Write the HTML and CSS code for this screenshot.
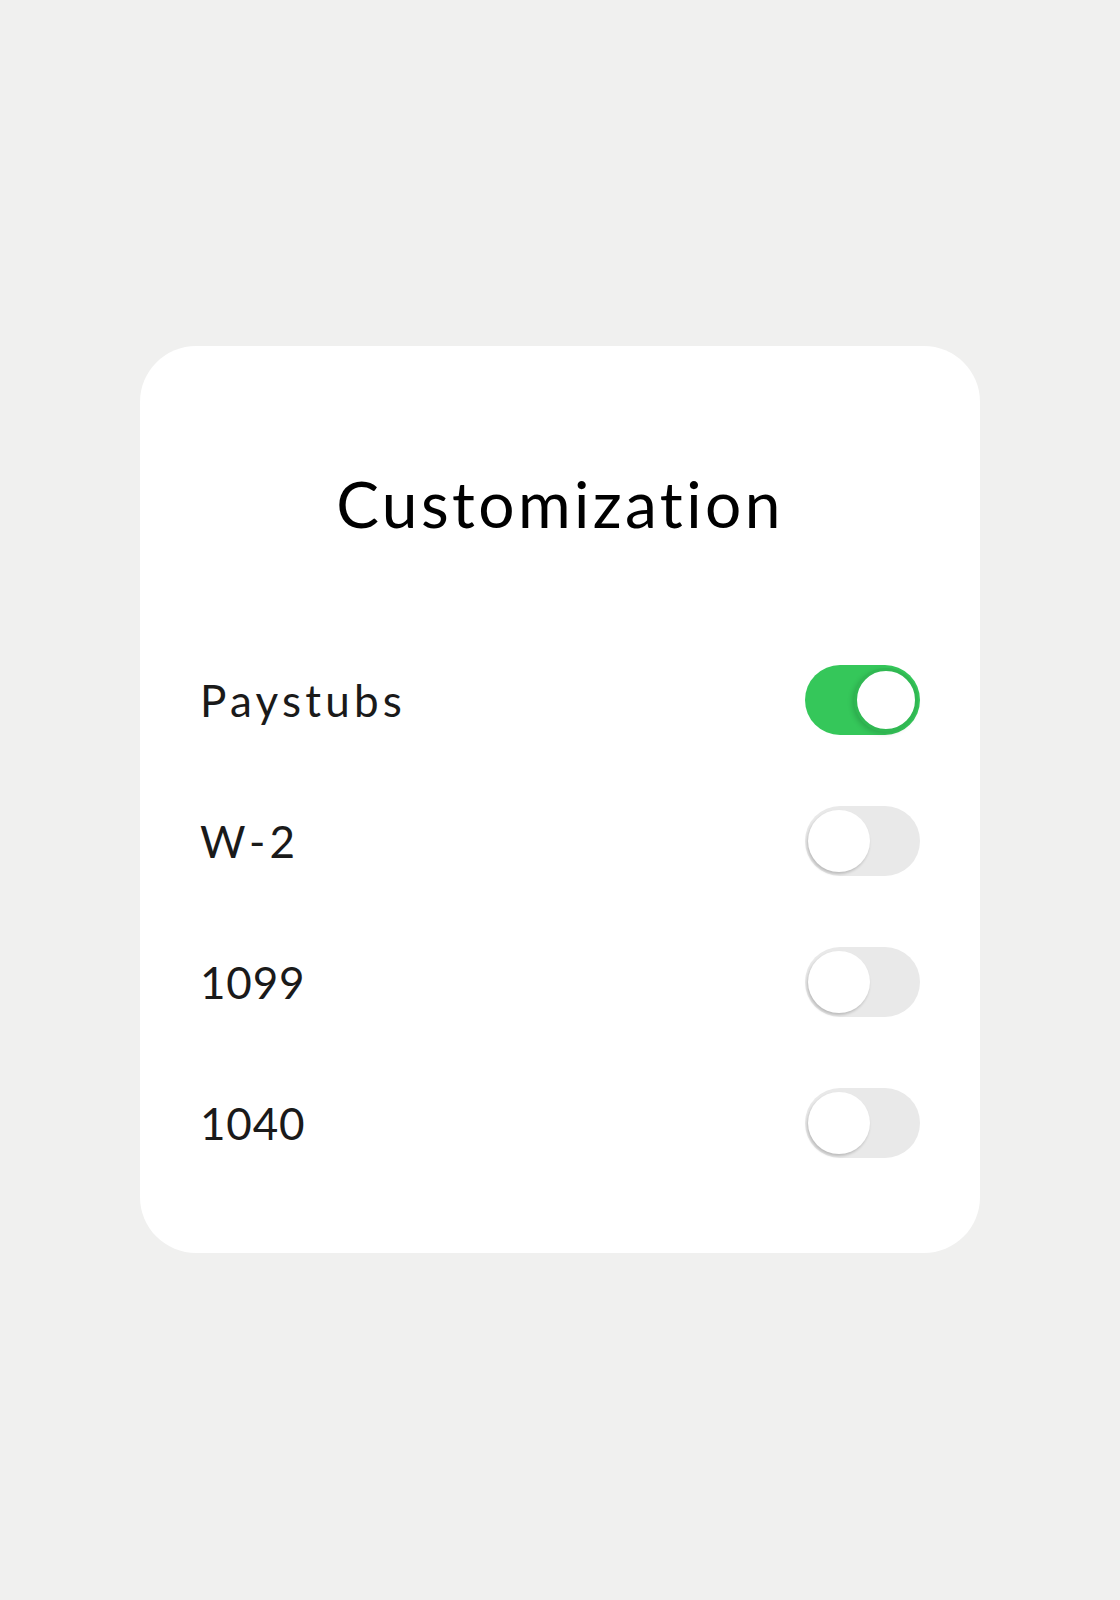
FILE: index.html
```html
<!DOCTYPE html>
<html>
<head>
<meta charset="utf-8">
<link rel="stylesheet" href="styles.css">
</head>
<body>
<div class="card">
  <h1 class="title">Customization</h1>
  <div class="list">
    <div class="row"><span class="label">Paystubs</span><span class="toggle on"><span class="knob"></span></span></div>
    <div class="row"><span class="label">W-2</span><span class="toggle"><span class="knob"></span></span></div>
    <div class="row"><span class="label num">1099</span><span class="toggle"><span class="knob"></span></span></div>
    <div class="row"><span class="label num">1040</span><span class="toggle"><span class="knob"></span></span></div>
  </div>
</div>
</body>
</html>
```
FILE: styles.css
```css
html, body {
  margin: 0;
  padding: 0;
  background: #f0f0ef;
}
body {
  width: 1120px;
  height: 1600px;
  font-family: "Lato", "Noto Sans", sans-serif;
  font-variant-ligatures: none;
}
.card {
  box-sizing: border-box;
  width: 840px;
  height: 907px;
  margin: 346px 0 0 140px;
  background: #ffffff;
  border-radius: 56px;
  padding: 118px 60px 0 60px;
}
.title {
  margin: 0;
  font-size: 64px;
  line-height: 80px;
  font-weight: 400;
  letter-spacing: 3.4px;
  color: #000;
  text-align: center;
}
.list {
  margin-top: 85px;
  display: flex;
  flex-direction: column;
}
.row {
  height: 141px;
  display: flex;
  align-items: center;
  justify-content: space-between;
}
.label {
  font-size: 44px;
  letter-spacing: 4.2px;
  color: #1a1a1a;
}
.label.num {
  letter-spacing: 0.8px;
}
.toggle {
  position: relative;
  width: 115px;
  height: 70px;
  border-radius: 35px;
  background: #e9e9e9;
  box-sizing: border-box;
}
.knob {
  position: absolute;
  top: 4px;
  left: 3px;
  width: 62px;
  height: 62px;
  border-radius: 50%;
  background: #fff;
  box-shadow: -1px 2px 3px rgba(0,0,0,0.2);
}
.toggle.on {
  background: #35c75a;
}
.toggle.on .knob {
  left: 49px;
  top: 3px;
  width: 64px;
  height: 64px;
  box-sizing: border-box;
  border: 3px solid #30b852;
  box-shadow: -2px 2px 5px rgba(0,0,0,0.15);
}
```
